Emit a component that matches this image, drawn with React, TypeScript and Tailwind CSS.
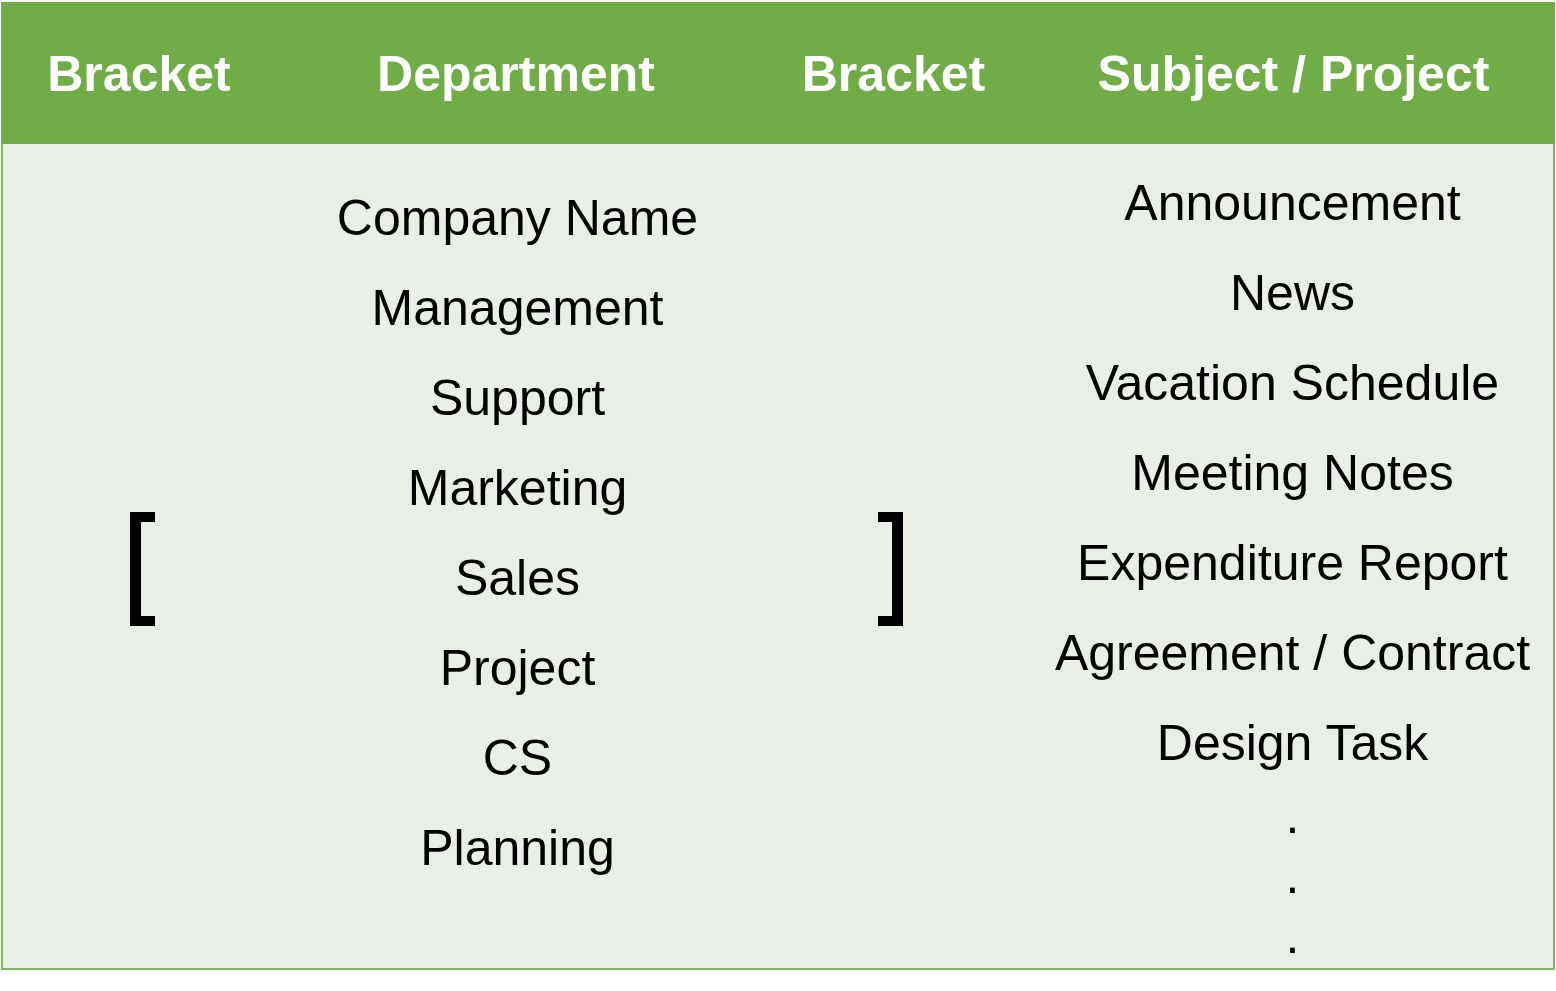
const departments = [
  "Company Name",
  "Management",
  "Support",
  "Marketing",
  "Sales",
  "Project",
  "CS",
  "Planning",
];

const subjects = [
  "Announcement",
  "News",
  "Vacation Schedule",
  "Meeting Notes",
  "Expenditure Report",
  "Agreement / Contract",
  "Design Task",
];

const headers = [
  { label: "Bracket", w: "w-[276px]" },
  { label: "Department", w: "w-[478px]" },
  { label: "Bracket", w: "w-[277px]" },
  { label: "Subject / Project", w: "flex-1" },
];

function Bracket({ side }: { side: "left" | "right" }) {
  return (
    <div
      className={
        side === "left"
          ? "h-[114px] w-[25px] border-y-[10px] border-l-[11px] border-black"
          : "h-[114px] w-[25px] border-y-[10px] border-r-[11px] border-black"
      }
    />
  );
}

export default function App() {
  return (
    <div
      className="w-[1556px] h-[991px] bg-white pt-[2px] pl-[1px]"
      style={{ fontFamily: '"Liberation Sans", Arial, sans-serif' }}
    >
      <div className="w-[1554px]">
        {/* header */}
        <div className="flex h-[142px] bg-[#70ad47] text-white text-[50px] font-bold">
          {headers.map((h, i) => (
            <div key={i} className={`${h.w} flex items-center justify-center pt-[2px]`}>
              {h.label}
            </div>
          ))}
        </div>

        {/* body */}
        <div className="flex h-[826px] bg-[#e9efe7] border-x-2 border-b-2 border-[#7cb95a] text-black text-[50px]">
          <div className="w-[274px] flex justify-center pt-[368px] pl-[4px]">
            <Bracket side="left" />
          </div>
          <div className="w-[478px] flex flex-col items-center pt-[29px] pl-[3px] leading-[90px]">
            {departments.map((d) => (
              <div key={d}>{d}</div>
            ))}
          </div>
          <div className="w-[277px] flex justify-center pt-[368px] pr-[6px]">
            <Bracket side="right" />
          </div>
          <div className="flex-1 flex flex-col items-center pt-[14px] leading-[90px]">
            {subjects.map((s) => (
              <div key={s}>{s}</div>
            ))}
            <div className="mt-[-2px] leading-[60px]">
              <div>.</div>
              <div>.</div>
              <div>.</div>
            </div>
          </div>
        </div>
      </div>
    </div>
  );
}
